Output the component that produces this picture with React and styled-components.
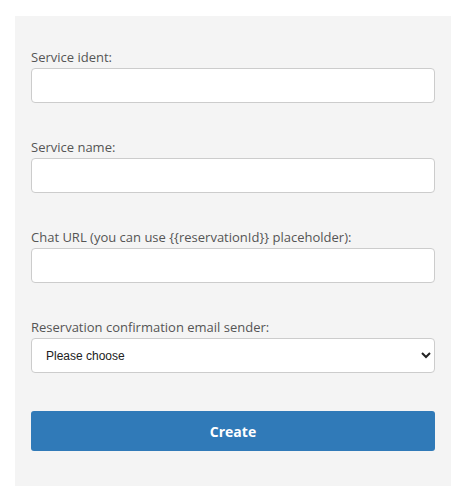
import React from "react";
import styled, { createGlobalStyle } from "styled-components";

const GlobalStyle = createGlobalStyle`
  body {
    margin: 0;
    background: #ffffff;
    font-family: "Open Sans", "Liberation Sans", sans-serif;
  }
`;

function App() {
  return (
    <>
      <GlobalStyle />
      <Panel>
        <Field>
          <Label htmlFor="ident">Service ident:</Label>
          <TextInput id="ident" type="text" />
        </Field>
        <Field>
          <Label htmlFor="name">Service name:</Label>
          <TextInput id="name" type="text" />
        </Field>
        <Field>
          <Label htmlFor="chat">
            Chat URL (you can use {"{{reservationId}}"} placeholder):
          </Label>
          <TextInput id="chat" type="text" />
        </Field>
        <Field>
          <Label htmlFor="sender">Reservation confirmation email sender:</Label>
          <Select id="sender" defaultValue="">
            <option value="">Please choose</option>
          </Select>
        </Field>
        <SubmitButton type="button">Create</SubmitButton>
      </Panel>
    </>
  );
}

const Panel = styled.form`
  display: flex;
  flex-direction: column;
  margin: 16px 16px 0 15px;
  padding: 32px 16px 35px;
  background: #f4f4f4;
`;

const Field = styled.div`
  display: flex;
  flex-direction: column;
  gap: 2px;
  margin-bottom: 35px;

  &:last-of-type {
    margin-bottom: 38px;
  }
`;

const Label = styled.label`
  font-size: 13px;
  line-height: 18px;
  color: #555555;
`;

const TextInput = styled.input`
  box-sizing: border-box;
  height: 35px;
  width: 100%;
  padding: 0 12px;
  border: 1px solid #cccccc;
  border-radius: 4px;
  background: #ffffff;
  font-size: 13px;
  outline: none;
`;

const Select = styled.select`
  box-sizing: border-box;
  height: 35px;
  width: 100%;
  padding: 0 10px;
  border: 1px solid #cccccc;
  border-radius: 4px;
  background: #ffffff;
  color: #222222;
  font-family: "Liberation Sans", Arial, sans-serif;
  font-size: 12px;
  outline: none;
`;

const SubmitButton = styled.button`
  height: 40px;
  width: 100%;
  border: none;
  border-radius: 3px;
  background: #307ab8;
  color: #ffffff;
  font-family: "Open Sans", sans-serif;
  font-size: 14px;
  font-weight: 700;
  cursor: pointer;
`;

export default App;
